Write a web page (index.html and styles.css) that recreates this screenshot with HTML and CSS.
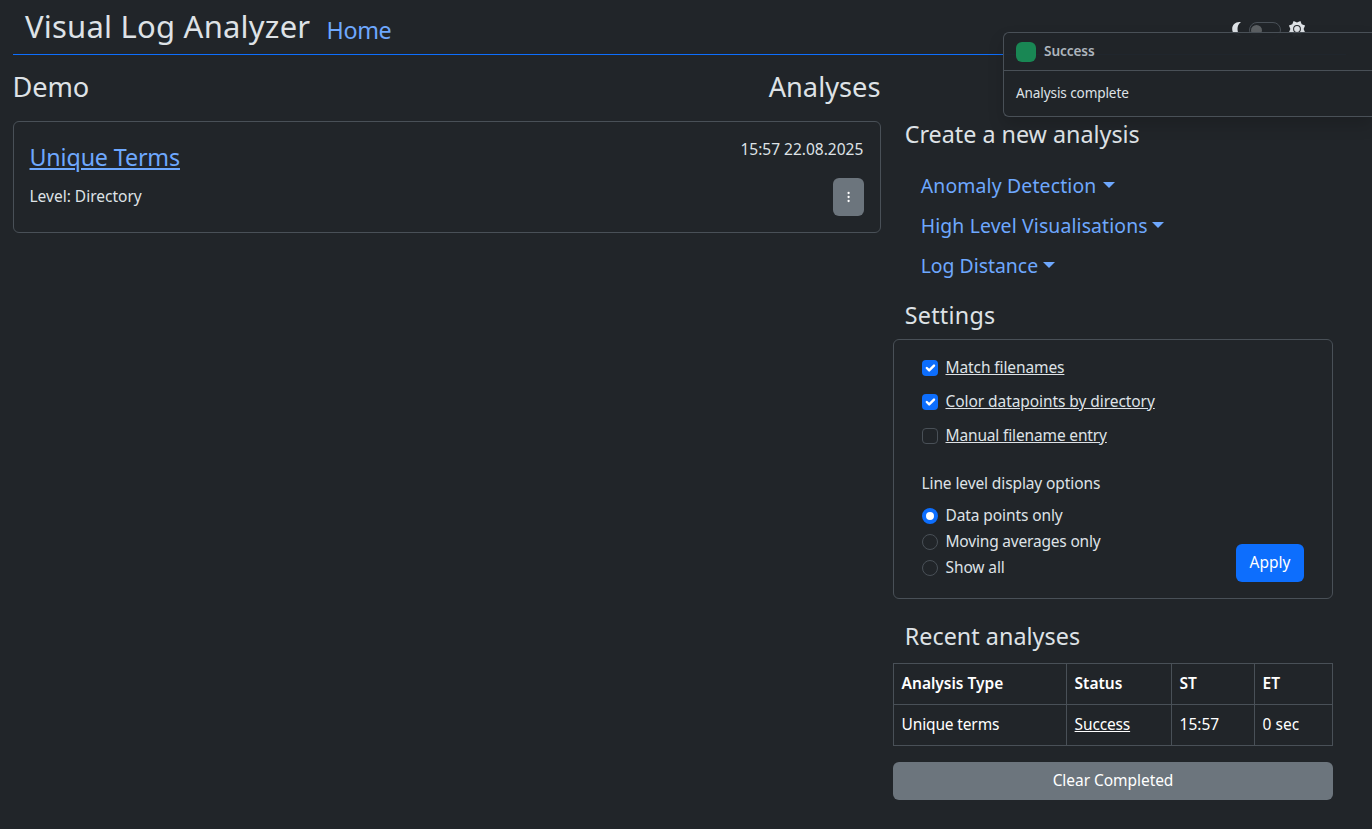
FILE: index.html
```
<!DOCTYPE html>
<html lang="en">
<head>
<meta charset="utf-8">
<title>Visual Log Analyzer</title>
<link rel="stylesheet" href="styles.css">
</head>
<body>
<header class="topbar">
  <h1 class="brand">Visual Log Analyzer</h1>
  <a class="home">Home</a>
  <div class="theme">
    <svg width="10" height="16" viewBox="0 0 10 16"><path d="M9.900 2.200C4.900 1.400 1.200 4.500 1.200 9S4.900 16.500 9.900 15.800C7.600 14.500 6.500 12 6.500 9S7.600 3.500 9.900 2.200Z"/></svg>
    <span class="switch"></span>
    <svg width="18" height="18" viewBox="0 0 18 18"><path fill-rule="evenodd" d="M9 2.400 12.400.9 13.700 4.300 17.100 5.600 15.600 9 17.100 12.400 13.700 13.700 12.400 17.100 9 15.600 5.600 17.100 4.300 13.700.9 12.400 2.400 9 .9 5.600 4.300 4.300 5.600.9ZM9 5.100a3.900 3.900 0 1 0 0 7.800 3.900 3.900 0 0 0 0-7.800Z"/><circle cx="9" cy="9" r="2.900"/></svg>
  </div>
</header>
<main class="layout">
  <section class="left">
    <div class="heads"><h2>Demo</h2><h2 class="wide">Analyses</h2></div>
    <article class="card analysis">
      <div class="info"><a class="name">Unique Terms</a><p>Level: Directory</p></div>
      <div class="meta"><span>15:57 22.08.2025</span>
        <button class="dots"><svg width="4" height="12" viewBox="0 0 4 12"><circle cx="1.600" cy="2" r="1.150"/><circle cx="1.600" cy="6" r="1.150"/><circle cx="1.600" cy="10" r="1.150"/></svg></button></div>
    </article>
  </section>
  <aside class="right">
    <h3>Create a new analysis</h3>
    <nav class="menu">
      <a class="anomaly">Anomaly Detection</a>
      <a class="visual">High Level Visualisations</a>
      <a class="distance">Log Distance</a>
    </nav>
    <h3 class="settings-title">Settings</h3>
    <form class="card settings">
      <label class="check"><i class="box on"><svg width="16" height="16" viewBox="0 0 20 20"><path d="m6 10 3 3 6-6"/></svg></i><u>Match filenames</u></label>
      <label class="check color"><i class="box on"><svg width="16" height="16" viewBox="0 0 20 20"><path d="m6 10 3 3 6-6"/></svg></i><u>Color datapoints by directory</u></label>
      <label class="check manual"><i class="box"></i><u>Manual filename entry</u></label>
      <p class="legend">Line level display options</p>
      <label class="radio"><i class="dot on"></i><span>Data points only</span></label>
      <label class="radio moving"><i class="dot"></i><span>Moving averages only</span></label>
      <div class="last"><label class="radio"><i class="dot"></i><span>Show all</span></label>
      <button type="button" class="btn apply">Apply</button></div>
    </form>
    <h3 class="recent">Recent analyses</h3>
    <table>
      <tr><th class="c1">Analysis Type</th><th class="c2">Status</th><th class="c3">ST</th><th>ET</th></tr>
      <tr><td class="tight">Unique terms</td><td class="tight"><u>Success</u></td><td>15:57</td><td>0 sec</td></tr>
    </table>
    <button class="btn clear">Clear Completed</button>
  </aside>
</main>
<div class="toast">
  <div class="toast-head"><i class="mark"></i><strong>Success</strong></div>
  <div class="toast-body">Analysis complete</div>
</div>
</body>
</html>
```
FILE: styles.css
```
* { box-sizing: border-box; }
body { margin: 0; height: 829px; overflow: hidden; position: relative; background: #212529; color: #dee2e6; font: 15.5px/24px "Noto Sans", sans-serif; }
h1, h2, h3, p { margin: 0; font-weight: 400; }
a { color: #6ea8fe; }
button { font: inherit; border: 0; border-radius: 6px; color: #fff; padding: 0; }
.topbar { display: flex; height: 55px; margin: 0 26px 0 13px; padding-left: 12px; border-bottom: 1px solid #0d6efd; }
.brand { font-size: 31px; line-height: 38px; padding-top: 7px; width: 301.500px; white-space: nowrap; letter-spacing: .22px; }
.home { font-size: 23.3px; line-height: 30px; padding-top: 15px; letter-spacing: -.35px; }
.theme { display: flex; margin: 20px 40.500px 0 auto; align-items: flex-start; }
.theme svg { fill: #dee2e6; }
.switch { width: 32px; height: 16px; margin: 2px 7px 0 8px; border: 1px solid #495057; border-radius: 8px; display: flex; padding: 1.500px; }
.switch::before { content: ""; width: 11px; height: 11px; border-radius: 50%; background: #5c6063; }
.layout { display: flex; gap: 12px; padding-left: 13px; }
.left { width: 868px; padding-top: 15px; }
.heads { display: flex; justify-content: space-between; height: 51px; }
h2 { font-size: 27.2px; line-height: 34px; letter-spacing: -.1px; margin: 0 .500px 0 -.500px; }
.wide { letter-spacing: .02px; }
.card { border: 1px solid #495057; border-radius: 6px; }
.analysis { height: 112px; padding: 15px 16px; display: flex; justify-content: space-between; }
.info { margin-left: -.500px; }
.name { font-size: 23.3px; line-height: 30px; letter-spacing: -.16px; text-decoration: underline; text-decoration-thickness: 2px; text-underline-offset: 2px; display: block; padding-top: 5px; }
.info p { padding-top: 12px; }
.meta { display: flex; flex-direction: column; align-items: flex-end; }
.meta span { margin-right: .700px; }
.dots { width: 31px; height: 38px; margin-top: 17px; background: #6c757d; display: flex; align-items: center; justify-content: center; fill: #fff; }
.right { width: 440px; padding-top: 65px; }
h3 { font-size: 23.3px; line-height: 29px; padding-left: 11.700px; }
.settings-title { letter-spacing: .26px; }
.recent { letter-spacing: .05px; }
.menu { display: flex; flex-direction: column; padding: 17px 0 15px 27.700px; font-size: 19.4px; line-height: 40px; }
.menu a { display: flex; align-items: center; gap: 6px; }
.menu .anomaly { letter-spacing: .16px; }
.menu .visual { letter-spacing: .13px; gap: 4px; }
.menu .distance { gap: 5px; }
.menu a::after { content: ""; border: 6px solid transparent; border-top-color: #6ea8fe; border-bottom: 0; margin-top: -2px; }
.settings { height: 260px; margin: 9px 0 23px; padding: 15px 28px; }
.check, .radio { display: flex; align-items: center; gap: 7.500px; height: 24px; margin-bottom: 10px; letter-spacing: -.1px; }
.color { letter-spacing: -.07px; }
.manual { letter-spacing: -.15px; }
.radio { margin-bottom: 2px; }
.moving { letter-spacing: -.19px; }
.box, .dot { width: 16px; height: 16px; margin-top: 2px; border: 1px solid #495057; border-radius: 4px; display: flex; }
.box.on { background: #0d6efd; border: 0; }
.box path { fill: none; stroke: #fff; stroke-width: 3; stroke-linecap: round; stroke-linejoin: round; }
.dot { border-radius: 50%; }
.dot.on { border: 4.500px solid #0d6efd; background: #fff; }
.legend { padding: 14px 0 8px; margin-left: -.500px; letter-spacing: -.11px; }
.last { display: flex; justify-content: space-between; height: 26px; }
.btn { height: 38px; line-height: 36px; padding-bottom: 2px; }
.apply { width: 68px; margin-top: -11px; background: #0d6efd; }
table { width: 440px; height: 83px; margin: 12px 0 16px; border-collapse: collapse; table-layout: fixed; color: #fff; }
td, th { border: 1px solid #495057; padding: 0 8px 3px 7.600px; text-align: left; height: 41px; }
th { font-weight: 600; }
.tight { letter-spacing: -.15px; }
.c1 { width: 173px; } .c2 { width: 105px; } .c3 { width: 83px; }
.clear { width: 440px; background: #6c757d; letter-spacing: -.05px; }
.toast { position: absolute; left: 1003px; top: 32px; width: 369px; height: 85px; border: 1px solid #495057; border-right: 0; border-radius: 6px 0 0 6px; background: rgba(33,37,41,.98); box-shadow: 0 8px 16px rgba(0,0,0,.15); font-size: 13.6px; }
.toast-head { display: flex; align-items: center; gap: 8px; height: 38px; padding-left: 12px; border-bottom: 1px solid #495057; color: #adb5bd; }
.mark { width: 20px; height: 20px; border-radius: 6px; background: #198754; }
.toast-head strong { font-weight: 600; margin-top: -2px; letter-spacing: -.08px; }
.toast-body { padding: 10px 12px; letter-spacing: -.12px; }
```
